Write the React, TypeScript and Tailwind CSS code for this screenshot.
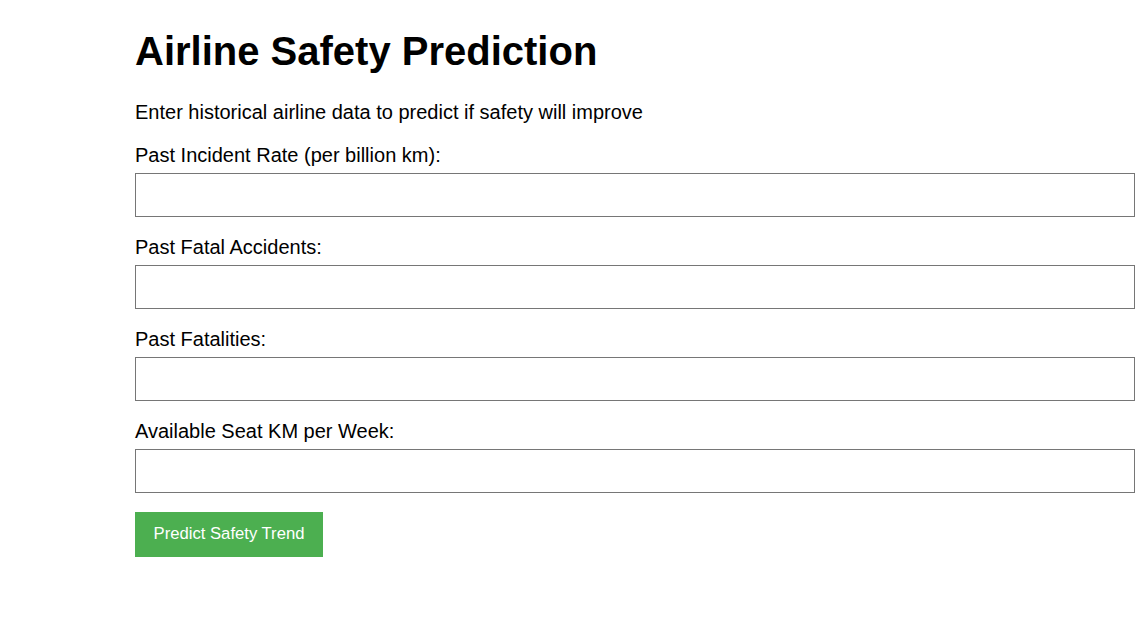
import React from "react";

const fields = [
  "Past Incident Rate (per billion km):",
  "Past Fatal Accidents:",
  "Past Fatalities:",
  "Available Seat KM per Week:",
];

export default function App() {
  return (
    <div
      className="min-h-[625px] bg-white text-black pl-[135px] pt-[28px]"
      style={{ fontFamily: '"Liberation Sans", Arial, sans-serif' }}
    >
      <div className="w-[1000px]">
        <h1 className="text-[40px] leading-[46px] font-bold m-0">Airline Safety Prediction</h1>
        <p className="text-[20px] leading-[23px] mt-[27px] mb-[20px]">
          Enter historical airline data to predict if safety will improve
        </p>
        {fields.map((f) => (
          <div key={f} className="flex flex-col">
            <label className="text-[20px] leading-[23px] mb-[6px]">{f}</label>
            <input
              type="text"
              className="block w-[1000px] h-[44px] border border-[#767676] bg-white mb-[19px] outline-none"
            />
          </div>
        ))}
        <button className="w-[188px] h-[45px] pb-[2px] bg-[#4CAF50] text-white text-[16.67px] leading-[19px]">
          Predict Safety Trend
        </button>
      </div>
    </div>
  );
}
